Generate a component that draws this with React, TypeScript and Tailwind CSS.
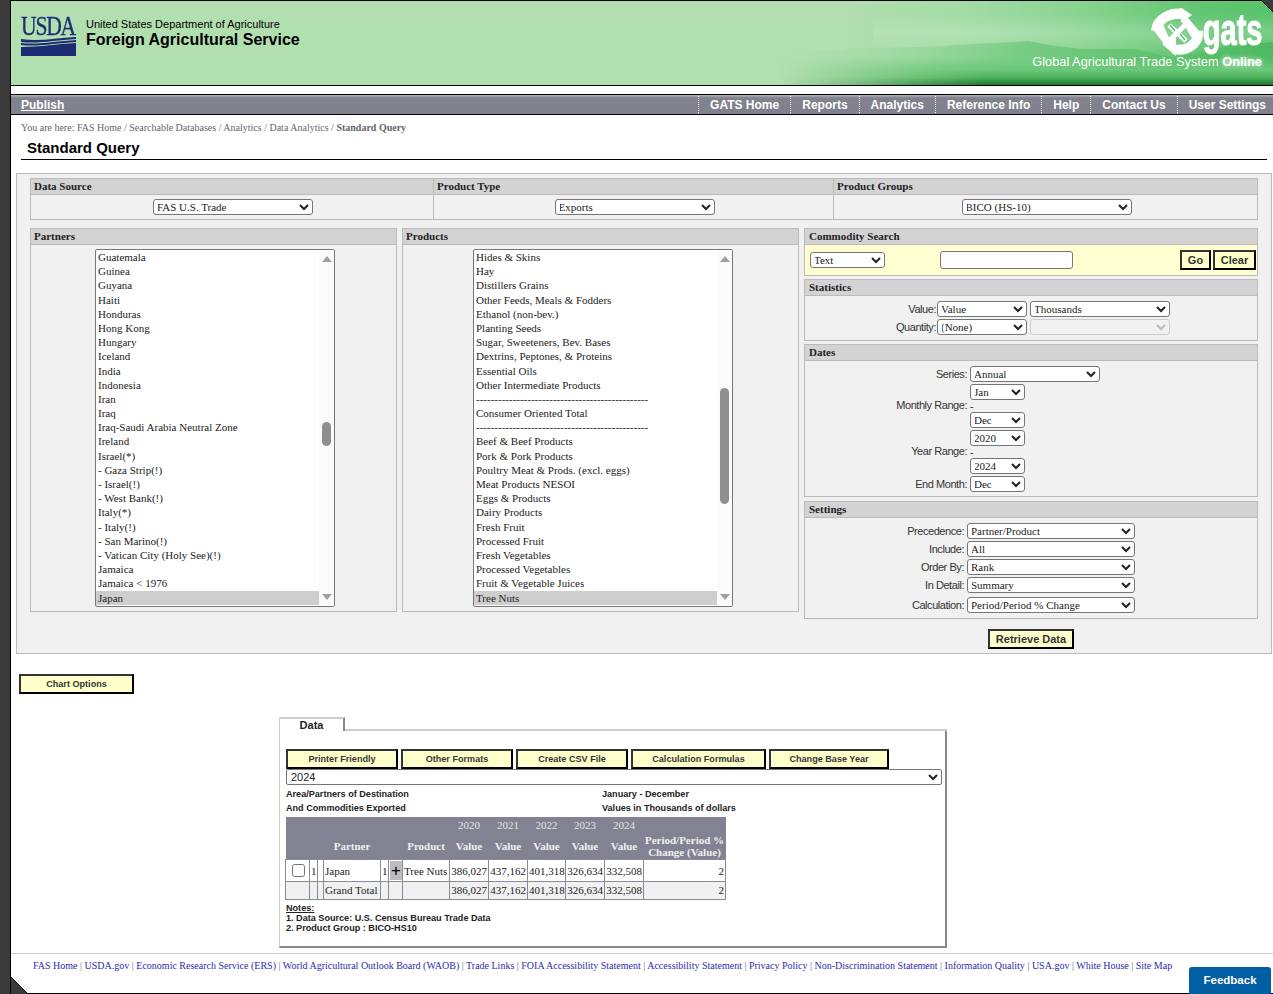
const partners = [
  'Guatemala', 'Guinea', 'Guyana', 'Haiti', 'Honduras', 'Hong Kong', 'Hungary', 'Iceland', 'India', 'Indonesia',
  'Iran', 'Iraq', 'Iraq-Saudi Arabia Neutral Zone', 'Ireland', 'Israel(*)', '- Gaza Strip(!)', '- Israel(!)',
  '- West Bank(!)', 'Italy(*)', '- Italy(!)', '- San Marino(!)', '- Vatican City (Holy See)(!)', 'Jamaica',
  'Jamaica < 1976', 'Japan',
];

const products = [
  'Hides & Skins', 'Hay', 'Distillers Grains', 'Other Feeds, Meals & Fodders', 'Ethanol (non-bev.)', 'Planting Seeds',
  'Sugar, Sweeteners, Bev. Bases', 'Dextrins, Peptones, & Proteins', 'Essential Oils', 'Other Intermediate Products',
  '-----------------------------------------------', 'Consumer Oriented Total',
  '-----------------------------------------------', 'Beef & Beef Products', 'Pork & Pork Products',
  'Poultry Meat & Prods. (excl. eggs)', 'Meat Products NESOI', 'Eggs & Products', 'Dairy Products', 'Fresh Fruit',
  'Processed Fruit', 'Fresh Vegetables', 'Processed Vegetables', 'Fruit & Vegetable Juices', 'Tree Nuts',
];

const navItems = ['GATS Home', 'Reports', 'Analytics', 'Reference Info', 'Help', 'Contact Us', 'User Settings'];

const footerLinks = [
  'FAS Home', 'USDA.gov', 'Economic Research Service (ERS)', 'World Agricultural Outlook Board (WAOB)', 'Trade Links',
  'FOIA Accessibility Statement', 'Accessibility Statement', 'Privacy Policy', 'Non-Discrimination Statement',
  'Information Quality', 'USA.gov', 'White House', 'Site Map',
];

const colWidths = [24, 8, 6, 57, 8, 14, 47, 39, 39, 38, 39, 39, 82];
const values = ['386,027', '437,162', '401,318', '326,634', '332,508'];
const years = ['2020', '2021', '2022', '2023', '2024'];

/** Native select with the border preflight strips away. */
const selectClasses =
  "h-4 rounded-[3px] border border-[#767676] bg-white pl-0 indent-[-1px] font-['Liberation_Serif',serif] text-[11px] text-[#222]";
const buttonClasses =
  "border-2 border-[#333] border-r-black border-b-black bg-[#ffffcc] font-['Liberation_Sans',sans-serif] font-bold text-[#333]";
const labelClasses = "font-['Liberation_Sans',sans-serif] text-[11px] tracking-[-0.45px] text-[#333]";
const cellClasses = 'border border-[#8a8a98] px-[1px] text-[#222]';

function PanelHead({ children, inset }: { children: React.ReactNode; inset?: boolean }) {
  return (
    <div className={`h-4 border-b border-[#bbb] bg-[#d3d3d3] text-[11px] leading-[15px] font-bold text-[#222] ${inset ? 'pl-1' : 'pl-[3px]'}`}>
      {children}
    </div>
  );
}

function Select({ width, value, disabled }: { width: string; value: string; disabled?: boolean }) {
  return (
    <select
      className={`${selectClasses} ${width} disabled:border-[#ccc] disabled:bg-[#f1f1f1] disabled:text-[#bbb]`}
      disabled={disabled}
      defaultValue={value}
    >
      <option>{value}</option>
    </select>
  );
}

function ListBox({ items, thumbClass }: { items: string[]; thumbClass: string }) {
  return (
    <div className="relative h-[358px] w-full overflow-hidden rounded-[2px] border border-[#767676] bg-white">
      {items.map((item, i) => (
        <div
          key={i}
          className={`mr-[15px] h-[14.2px] pl-[2px] text-[11px] leading-[14px] whitespace-nowrap text-[#222] ${i === items.length - 1 ? 'bg-[#cecece]' : ''}`}
        >
          {item}
        </div>
      ))}
      {/* scrollbar */}
      <div className="absolute top-0 right-0 bottom-0 w-[15px] bg-[#fbfbfb]">
        <div className="absolute top-[6px] left-[3px] h-0 w-0 border-x-[5px] border-b-[6px] border-x-transparent border-b-[#a0a0a0]" />
        <div className={`absolute left-[3px] w-[9px] rounded-[5px] bg-[#8f8f8f] ${thumbClass}`} />
        <div className="absolute bottom-[6px] left-[3px] h-0 w-0 border-x-[5px] border-t-[6px] border-x-transparent border-t-[#a0a0a0]" />
      </div>
    </div>
  );
}

function FormRow({ label, width, value, last }: { label: string; width: string; value: string; last?: boolean }) {
  return (
    <div className={`flex h-4 items-center justify-end ${last ? 'mt-1' : 'mt-[2px]'} first:mt-0`}>
      <span className={`${labelClasses} mr-[3px]`}>{label}</span>
      <Select width={width} value={value} />
    </div>
  );
}

function Banner() {
  return (
    <div className="relative h-[86px] overflow-hidden border-y border-black bg-[linear-gradient(90deg,#b2dfb0_0%,#b2dfb0_66%,#a4dca6_75%,#8bd492_84%,#62c672_94%,#58c36a_100%)]">
      <svg className="absolute top-0 right-0 h-[84px] w-[520px]" viewBox="0 0 520 84" preserveAspectRatio="none">
        <defs>
          <linearGradient id="bands" x1="0" y1="0" x2="0" y2="1">
            <stop offset="0" stopColor="#fff" stopOpacity="0" />
            <stop offset="0.5" stopColor="#fff" stopOpacity="0.2" />
            <stop offset="1" stopColor="#fff" stopOpacity="0" />
          </linearGradient>
          <linearGradient id="ground" x1="0" y1="0" x2="0" y2="1">
            <stop offset="0" stopColor="#6cc87a" stopOpacity="0" />
            <stop offset="0.45" stopColor="#6cc87a" />
            <stop offset="0.72" stopColor="#4fb35e" />
            <stop offset="1" stopColor="#17782a" />
          </linearGradient>
          <linearGradient id="fade" x1="0" y1="0" x2="1" y2="0">
            <stop offset="0" stopColor="#8fd296" stopOpacity="0" />
            <stop offset="0.2" stopColor="#8fd296" stopOpacity="0.35" />
            <stop offset="0.5" stopColor="#6fc97d" stopOpacity="0.85" />
            <stop offset="1" stopColor="#4eb961" />
          </linearGradient>
          <linearGradient id="groundFade" x1="0" y1="0" x2="1" y2="0">
            <stop offset="0.05" stopColor="#000" />
            <stop offset="0.45" stopColor="#fff" />
          </linearGradient>
          <mask id="groundMask">
            <rect width="520" height="84" fill="url(#groundFade)" />
          </mask>
        </defs>
        <path d="M120 12 H520 V52 H120 Z" fill="url(#bands)" mask="url(#groundMask)" />
        <path
          d="M40 50 L110 47 L170 46 L220 43 L262 41 L275 40 L295 44 L330 48 L380 48 L420 56 L445 52 L470 46 L520 41 L520 72 L40 72 Z"
          fill="url(#fade)"
        />
        <rect x="0" y="56" width="520" height="28" fill="url(#ground)" mask="url(#groundMask)" />
      </svg>
      {/* gats logo */}
      <svg className="absolute top-[7px] left-[1139px] h-[50px] w-[56px]" viewBox="0 0 56 50">
        <path d="M6 23 C7 11 20 4 33 6" fill="none" stroke="#fff" strokeWidth="10" />
        <path d="M30 -1 L42 7 L31 15 Z" fill="#fff" />
        <path d="M48 23 C49 37 36 44 23 41" fill="none" stroke="#fff" strokeWidth="10" />
        <path d="M26 48 L12 36 L26 30 Z" fill="#fff" />
        <path d="M2 20 L14 36 L20 32 L12 14 Z M50 24 L38 10 L32 14 L42 30 Z" fill="#fff" />
        <path d="M19 33 L36 16 M19 17 L36 33" stroke="#fff" strokeWidth="5" />
        <path d="M25 23 L20 17 M30 26 L35 32" stroke="#5cbf6c" strokeWidth="1.5" />
      </svg>
      <div className="absolute top-[6px] right-[11px] origin-right scale-x-[0.66] font-['Liberation_Sans',sans-serif] text-[44px] leading-[46px] font-bold text-white [-webkit-text-stroke:1px_white]">
        gats
      </div>
      <div className="absolute top-[53px] right-[11px] font-['Liberation_Sans',sans-serif] text-[12.8px] leading-[16px] text-white">
        Global Agricultural Trade System <b className="[text-shadow:0_0_4px_#fff]">Online</b>
      </div>
      {/* USDA logo */}
      <div className="absolute top-[15px] left-[10px] w-[56px]">
        <div className="origin-left scale-x-[0.8] font-['Liberation_Serif',serif] text-[27px] leading-[21px] tracking-[-1.5px] text-[#1d2b72] [-webkit-text-stroke:0.3px_#1d2b72]">
          USDA
        </div>
        <svg className="block h-[19px] w-[55px]" viewBox="0 0 55 19">
          <path d="M0 2 C18 5 35 1 55 0 L55 2 C35 3 18 7 0 5 Z M0 6 C18 8 35 4 55 3 L55 5 C35 6 18 10 0 8 Z" fill="#1d2b72" />
          <path d="M0 10 C18 10 35 7 55 6 L55 19 L0 19 Z" fill="#1d2b72" />
        </svg>
      </div>
      <div className="absolute top-[17px] left-[75px] font-['Liberation_Sans',sans-serif] text-black">
        <div className="text-[11px] leading-[13px]">United States Department of Agriculture</div>
        <div className="text-[16px] leading-[17px] font-bold">Foreign Agricultural Service</div>
      </div>
    </div>
  );
}

function DataTable() {
  return (
    <table className="mt-[2px] -ml-px w-[440px] table-fixed border-collapse text-[11px] leading-[13px]">
      <colgroup>
        {colWidths.map((w, i) => (
          <col key={i} style={{ width: w }} />
        ))}
      </colgroup>
      <thead className="bg-[#828292] text-[#f0f0f0]">
        <tr className="h-[17px]">
          <th colSpan={7} />
          {years.map((y) => (
            <th key={y} className="font-normal text-[#e4e4e4]">{y}</th>
          ))}
          <th />
        </tr>
        <tr className="h-[25px]">
          <th colSpan={3} />
          <th className="font-bold">Partner</th>
          <th colSpan={2} />
          <th className="font-bold">Product</th>
          {years.map((y) => (
            <th key={y} className="font-bold">Value</th>
          ))}
          <th className="px-0 text-[11px] leading-[12px] font-bold">Period/Period % Change (Value)</th>
        </tr>
      </thead>
      <tbody>
        <tr className="h-[22px] bg-white">
          <td className={`${cellClasses} pl-[2px] text-center`}>
            <input type="checkbox" className="h-[13px] w-[13px] align-middle" />
          </td>
          <td className={`${cellClasses} pt-[2px]`}>1</td>
          <td className={cellClasses} />
          <td className={`${cellClasses} pt-[2px]`}>Japan</td>
          <td className={`${cellClasses} pt-[2px]`}>1</td>
          <td className={`${cellClasses} px-0`}>
            <div className="mx-auto flex h-[19px] w-[12px] items-center justify-center bg-[#bdbdbd] font-['Liberation_Sans',sans-serif] text-[17px] text-black">+</div>
          </td>
          <td className={`${cellClasses} pt-[2px] whitespace-nowrap`}>Tree Nuts</td>
          {values.map((v) => (
            <td key={v} className={`${cellClasses} pt-[2px] text-right`}>{v}</td>
          ))}
          <td className={`${cellClasses} pt-[2px] text-right`}>2</td>
        </tr>
        <tr className="h-[18px] bg-[#f1f1f1]">
          <td className={cellClasses} />
          <td className={cellClasses} />
          <td className={cellClasses} />
          <td className={`${cellClasses} whitespace-nowrap`}>Grand Total</td>
          <td className={cellClasses} />
          <td className={cellClasses} />
          <td className={cellClasses} />
          {values.map((v) => (
            <td key={v} className={`${cellClasses} text-right`}>{v}</td>
          ))}
          <td className={`${cellClasses} text-right`}>2</td>
        </tr>
      </tbody>
    </table>
  );
}

export default function App() {
  return (
    <div className="relative flex h-[994px] w-[1273px] overflow-hidden bg-[#3a3a3a] font-['Liberation_Serif',serif]">
      <div className="w-[10px] shrink-0" />
      <div className="flex min-w-0 flex-1 flex-col border-b border-l border-black bg-white">
        <Banner />

        <nav className="mt-2 flex h-[21px] items-center justify-between border-y border-black bg-[linear-gradient(180deg,#b4b4be_0px,#82828f_3px,#80808e_100%)] font-['Liberation_Sans',sans-serif] text-[12px] font-bold text-white">
          <a className="ml-[10px] underline">Publish</a>
          <div className="flex h-full items-center pr-[7px]">
            {navItems.map((item) => (
              <span key={item} className="flex h-[17px] items-center border-l border-dotted border-white pr-[11px] pl-[11px] leading-[14px] last:pr-0">
                {item}
              </span>
            ))}
          </div>
        </nav>

        <div className="h-6 pt-[7px] pl-[10px] text-[10px] leading-[12px] text-[#666]">
          You are here: FAS Home / Searchable Databases / Analytics / Data Analytics / <b>Standard Query</b>
        </div>
        <h1 className="mr-[6px] ml-[10px] h-[21px] border-b border-black pl-[6px] font-['Liberation_Sans',sans-serif] text-[15px] leading-[18px] font-bold text-black">
          Standard Query
        </h1>

        <div className="mt-[13px] ml-[5px] w-[1256px] border border-[#bbb] bg-[#f1f1f1] pt-1 pb-1 pl-[13px]">
          <div className="grid w-[1228px] grid-cols-[402px_400px_424px] border border-[#bbb]">
            {[
              { title: 'Data Source', value: 'FAS U.S. Trade', width: 'w-[160px]' },
              { title: 'Product Type', value: 'Exports', width: 'w-[160px]' },
              { title: 'Product Groups', value: 'BICO (HS-10)', width: 'w-[170px]' },
            ].map((c, i) => (
              <div key={c.title} className={i > 0 ? 'border-l border-[#bbb]' : ''}>
                <PanelHead>{c.title}</PanelHead>
                <div className="flex h-6 items-center justify-center pl-[2px]">
                  <Select width={c.width} value={c.value} />
                </div>
              </div>
            ))}
          </div>

          <div className="mt-2 flex gap-[5px]">
            <div className="h-[384px] w-[367px] border border-[#bbb]">
              <PanelHead>Partners</PanelHead>
              <div className="w-[304px] pt-1 pl-[64px]">
                <ListBox items={partners} thumbClass="top-[172px] h-[24px]" />
              </div>
            </div>
            <div className="h-[384px] w-[397px] border border-[#bbb]">
              <PanelHead>Products</PanelHead>
              <div className="w-[330px] pt-1 pl-[70px]">
                <ListBox items={products} thumbClass="top-[138px] h-[116px]" />
              </div>
            </div>

            <div className="flex w-[454px] flex-col">
              <div className="h-[48px] border border-[#bbb]">
                <PanelHead inset>Commodity Search</PanelHead>
                <div className="flex h-[30px] items-center bg-[#ffffd2] pl-[5px]">
                  <Select width="w-[75px]" value="Text" />
                  <input className="ml-[55px] h-[18px] w-[133px] rounded-[3px] border border-[#767676] bg-white" />
                  <button className={`${buttonClasses} ml-[107px] h-5 w-[31px] text-[11px]`}>Go</button>
                  <button className={`${buttonClasses} ml-[2px] h-5 w-[43px] text-[11px]`}>Clear</button>
                </div>
              </div>

              <div className="mt-[3px] h-[62px] border border-[#bbb]">
                <PanelHead inset>Statistics</PanelHead>
                <div className="grid grid-cols-[132px_auto] items-center pt-[5px]">
                  <div className={`${labelClasses} h-4 pr-px text-right leading-4`}>Value:</div>
                  <div className="flex gap-[3px]">
                    <Select width="w-[90px]" value="Value" />
                    <Select width="w-[140px]" value="Thousands" />
                  </div>
                  <div className={`${labelClasses} mt-[2px] h-4 pr-px text-right leading-4`}>Quantity:</div>
                  <div className="mt-[2px] flex gap-[3px]">
                    <Select width="w-[90px]" value="(None)" />
                    <Select width="w-[140px]" value="" disabled />
                  </div>
                </div>
              </div>

              <div className="mt-[3px] h-[153px] border border-[#bbb]">
                <PanelHead inset>Dates</PanelHead>
                <div className="grid grid-cols-[162px_auto] gap-x-[3px] pt-[5px]">
                  <div className={`${labelClasses} h-4 text-right leading-4`}>Series:</div>
                  <Select width="w-[130px]" value="Annual" />
                  <div className={`${labelClasses} self-center text-right`}>Monthly Range:</div>
                  <div className="mt-[2px] flex flex-col">
                    <Select width="w-[55px]" value="Jan" />
                    <span className={`${labelClasses} h-3 leading-3`}>-</span>
                    <Select width="w-[55px]" value="Dec" />
                  </div>
                  <div className={`${labelClasses} self-center text-right`}>Year Range:</div>
                  <div className="mt-[2px] flex flex-col">
                    <Select width="w-[55px]" value="2020" />
                    <span className={`${labelClasses} h-3 leading-3`}>-</span>
                    <Select width="w-[55px]" value="2024" />
                  </div>
                  <div className={`${labelClasses} mt-[2px] h-4 text-right leading-4`}>End Month:</div>
                  <div className="mt-[2px] flex">
                    <Select width="w-[55px]" value="Dec" />
                  </div>
                </div>
              </div>

              <div className="mt-1 h-[118px] border border-[#bbb]">
                <PanelHead inset>Settings</PanelHead>
                <div className="w-[330px] pt-[5px]">
                  <FormRow label="Precedence:" width="w-[168px]" value="Partner/Product" />
                  <FormRow label="Include:" width="w-[168px]" value="All" />
                  <FormRow label="Order By:" width="w-[168px]" value="Rank" />
                  <FormRow label="In Detail:" width="w-[168px]" value="Summary" />
                  <FormRow label="Calculation:" width="w-[168px]" value="Period/Period % Change" last />
                </div>
              </div>

              <button className={`${buttonClasses} mt-[10px] h-5 w-[86px] self-center text-[11px]`}>Retrieve Data</button>
            </div>
          </div>
        </div>

        <button className={`${buttonClasses} mt-5 ml-2 h-5 w-[115px] pt-px text-[9.1px]`}>Chart Options</button>

        <div className="mt-[23px] ml-[268px] w-[668px]">
          <div className="flex h-[14px]">
            <div className="w-[66px] border-t-2 border-r-2 border-l border-t-[#ccc] border-r-[#888] border-l-[#ccc] text-center font-['Liberation_Sans',sans-serif] text-[11px] leading-[12px] font-bold text-[#222]">
              Data
            </div>
            <div className="flex-1 border-b-2 border-[#ccc]" />
          </div>
          <div className="h-[217px] border-r-2 border-b-2 border-l border-r-[#888] border-b-[#888] border-l-[#ccc] pt-[18px] pl-[6px]">
            <div className="flex gap-[3px]">
              {[
                ['Printer Friendly', 'w-[112px]'],
                ['Other Formats', 'w-[112px]'],
                ['Create CSV File', 'w-[112px]'],
                ['Calculation Formulas', 'w-[135px]'],
                ['Change Base Year', 'w-[120px]'],
              ].map(([label, width]) => (
                <button key={label} className={`${buttonClasses} h-5 pt-px text-[9.1px] ${width}`}>{label}</button>
              ))}
            </div>
            <select className="block h-4 w-[656px] rounded-[2px] border border-[#767676] bg-white pl-0 font-['Liberation_Sans',sans-serif] text-[11px] text-[#222]" defaultValue="2024">
              <option>2024</option>
            </select>
            <div className="mt-[2px] grid grid-cols-[316px_auto] font-['Liberation_Sans',sans-serif] text-[9.1px] leading-[14px] font-bold text-[#222]">
              <div>Area/Partners of Destination</div>
              <div>January - December</div>
              <div>And Commodities Exported</div>
              <div>Values in Thousands of dollars</div>
            </div>
            <DataTable />
            <div className="mt-[3px] font-['Liberation_Sans',sans-serif] text-[9.1px] leading-[10px] font-bold text-[#222]">
              <div className="underline">Notes:</div>
              <div>1. Data Source: U.S. Census Bureau Trade Data</div>
              <div>2. Product Group : BICO-HS10</div>
            </div>
          </div>
        </div>

        <footer className="mt-[5px] flex-1 border-t border-[#ccc] pt-[6px] pl-[22px] text-[10px] leading-[12px] text-[#2b2bb0]">
          {footerLinks.map((link, i) => (
            <span key={link}>
              {i > 0 && <span className="text-[#666]"> | </span>}
              <a>{link}</a>
            </span>
          ))}
        </footer>
      </div>

      {/* page corner notches */}
      <svg className="absolute bottom-0 left-[11px] h-[17px] w-[16px]" viewBox="0 0 16 17">
        <path d="M0 0 L16 16 L16 17 L0 17 Z" fill="#3a3a3a" />
        <path d="M0 0 L16 16" stroke="#000" />
      </svg>
      <svg className="absolute top-0 right-0 h-[13px] w-[12px]" viewBox="0 0 12 13">
        <path d="M0 0 L12 0 L12 12 Z" fill="#3a3a3a" />
        <path d="M0 0 L12 12" stroke="#000" />
      </svg>

      <button className="absolute right-[2px] bottom-0 h-[27px] w-[82px] rounded-t-[3px] bg-[#005ea2] font-['Liberation_Sans',sans-serif] text-[11.5px] font-bold text-white">
        Feedback
      </button>
    </div>
  );
}
